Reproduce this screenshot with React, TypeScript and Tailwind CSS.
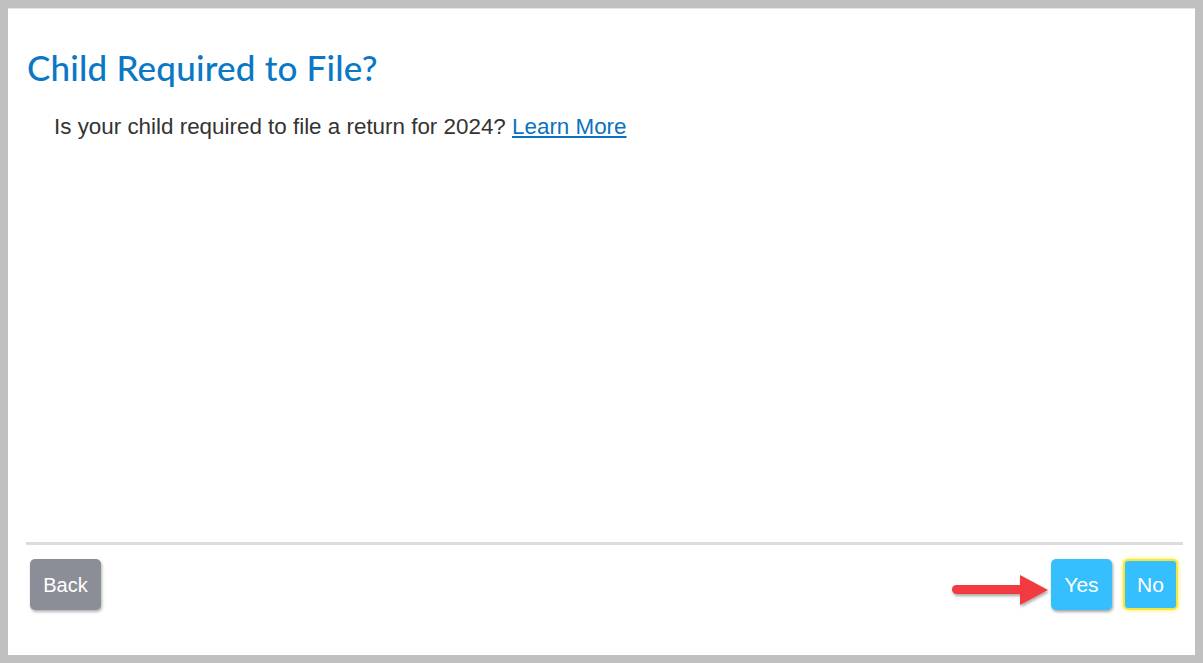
const App = () => {
  return (
    <div className="w-[1203px] h-[663px] bg-[#c0c0c0] p-2 font-['Liberation_Sans',Arial,sans-serif]">
      <div className="relative flex h-full flex-col bg-white border-t border-[#e4e4e4]">
        <div className="flex-1 pl-[19px] pt-[38px]">
          <h1 className="font-['Lato',sans-serif] text-[35px] leading-10 font-medium text-[#0a78c5] tracking-[0.2px]">
            Child Required to File?
          </h1>
          <p className="mt-[26px] pl-[27px] text-[22.4px] leading-7 text-[#333333]">
            Is your child required to file a return for 2024?{" "}
            <a href="#" className="text-[#0a72c2] underline">
              Learn More
            </a>
          </p>
        </div>
        <div className="ml-[18px] mr-[12px] h-[3px] bg-[#dcdcdc]" />
        <div className="flex items-start justify-between pl-[22px] pr-[17px] pt-[14px] pb-[45px]">
          <button className="h-[51px] w-[71px] rounded-[5px] bg-[#8b8e96] text-[20px] text-white shadow-[1px_2px_3px_rgba(0,0,0,0.3)]">
            Back
          </button>
          <div className="flex gap-[11px]">
            <button className="h-[51px] w-[61px] rounded-[5px] bg-[#35bfff] text-[21px] text-white shadow-[1px_2px_3px_rgba(0,0,0,0.35)]">
              Yes
            </button>
            <button className="h-[51px] w-[55px] rounded-[5px] border-2 border-[#f5e63a] bg-[#35bfff] text-[21px] text-white shadow-[0_0_4px_rgba(255,230,0,0.7)]">
              No
            </button>
          </div>
        </div>
        <svg
          className="absolute left-[940px] top-[563px]"
          width="112"
          height="46"
          viewBox="0 0 112 46"
        >
          <defs>
            <filter id="sh" x="-20%" y="-40%" width="140%" height="180%">
              <feDropShadow dx="1" dy="2" stdDeviation="1.5" floodColor="#000" floodOpacity="0.35" />
            </filter>
          </defs>
          <g filter="url(#sh)">
            <rect x="4" y="13" width="80" height="9" rx="4.5" fill="#f23b3f" />
            <polygon points="72,3 100,18 72,33" fill="#f23b3f" />
          </g>
        </svg>
      </div>
    </div>
  );
};

export default App;
